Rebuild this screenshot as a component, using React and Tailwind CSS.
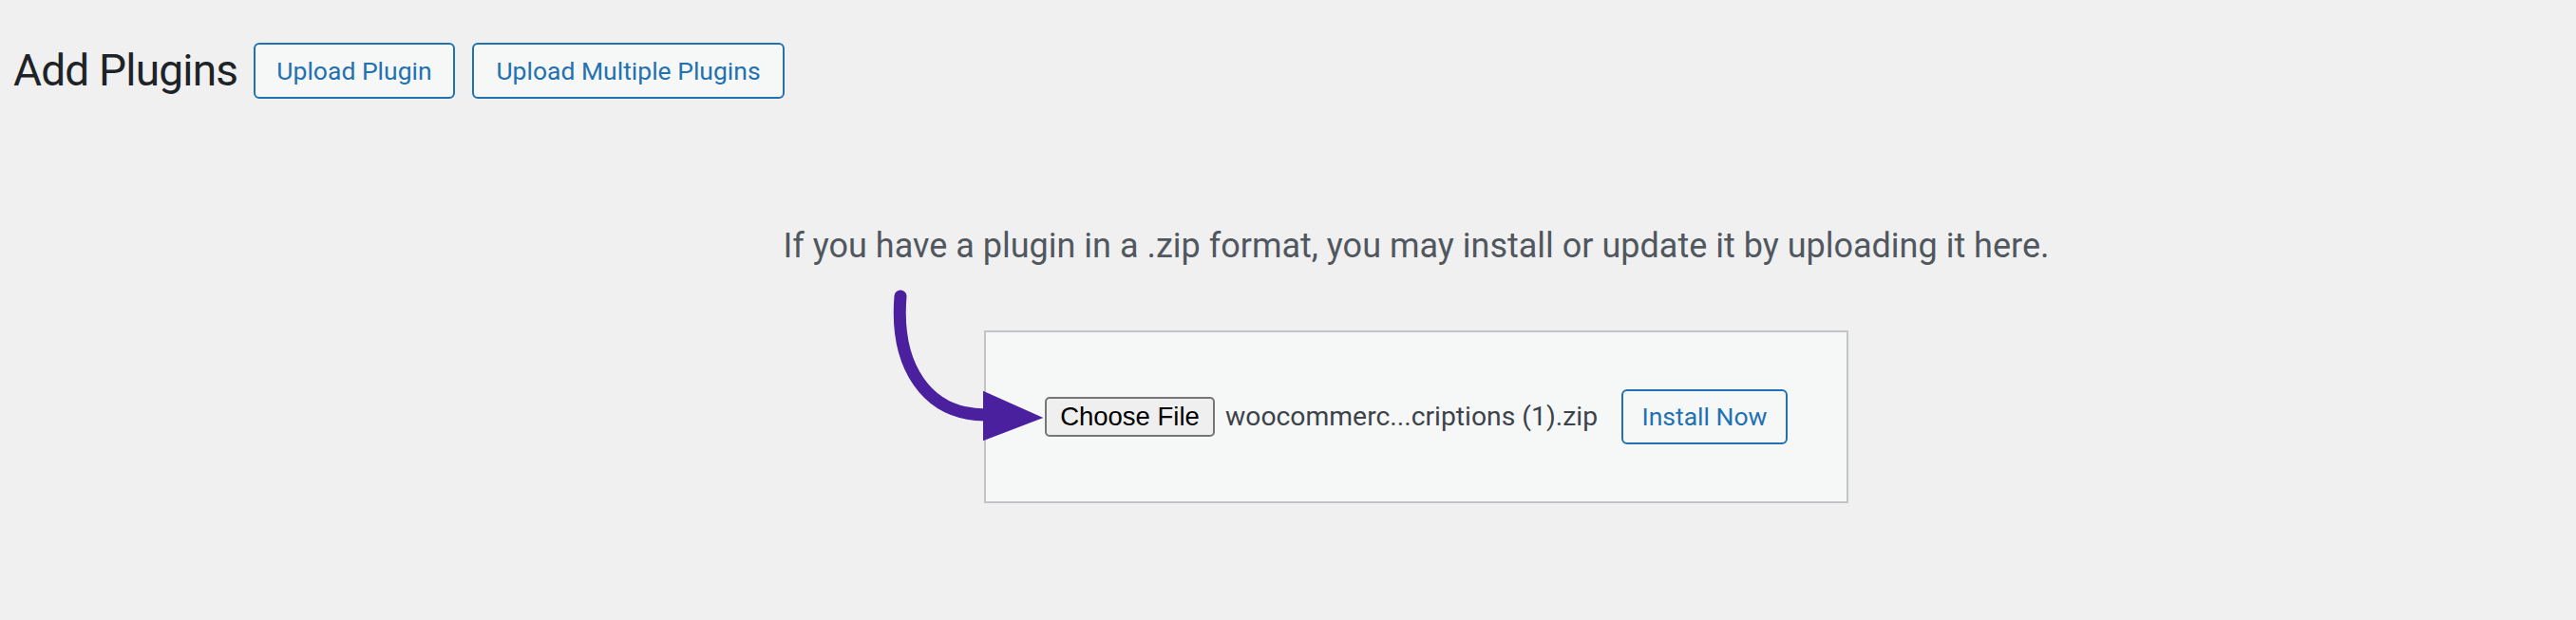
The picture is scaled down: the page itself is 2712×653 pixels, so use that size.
import React from "react";

export default function App() {
  return (
    <div className="relative w-[2712px] h-[653px] overflow-hidden bg-[#f0f0f1] font-['Roboto','Noto_Sans',sans-serif]">
      <div className="flex items-center pl-[14px] pt-[45px]">
        <h1 className="w-[235px] shrink-0 whitespace-nowrap text-[46px] leading-[59px] font-normal tracking-[-0.8px] text-[#1d2327]">Add Plugins</h1>
        <button className="ml-[18px] h-[59px] w-[212px] shrink-0 rounded-[6px] border-2 border-[#2271b1] bg-[#f6f7f7] text-[26.5px] text-[#2271b1]">
          Upload Plugin
        </button>
        <button className="ml-[18px] h-[59px] w-[329px] shrink-0 rounded-[6px] border-2 border-[#2271b1] bg-[#f6f7f7] text-[26.5px] text-[#2271b1]">
          Upload Multiple Plugins
        </button>
      </div>

      <div className="flex flex-col items-center pl-[270px]">
        <p className="mt-[128px] text-[36px] leading-[54px] text-[#50575e] text-center whitespace-nowrap">
          If you have a plugin in a .zip format, you may install or update it by uploading it here.
        </p>
        <div className="mt-[62px] flex h-[182px] w-[910px] items-center justify-between border-2 border-[#c3c4c7] bg-[#f6f7f7] px-[62px]">
          <div className="flex items-center">
            <span className="flex h-[42px] w-[179px] items-center justify-center rounded-[5px] border-2 border-[#767676] bg-[#efefef] font-['Liberation_Sans',Arial,sans-serif] text-[27.5px] text-black">
              Choose File
            </span>
            <span className="ml-[11px] text-[28.3px] text-[#3c434a] whitespace-nowrap">woocommerc...criptions (1).zip</span>
          </div>
          <button className="h-[58px] w-[175px] rounded-[6px] border-2 border-[#2271b1] bg-[#f6f7f7] text-[26.5px] text-[#2271b1]">
            Install Now
          </button>
        </div>
      </div>

      <svg className="absolute left-[920px] top-[295px]" width="200" height="180" viewBox="0 0 200 180">
        <path d="M28 17 C22 90 55 142 118 142" fill="none" stroke="#4a209f" strokeWidth="13" strokeLinecap="round" />
        <polygon points="115,116.7 115,169.3 178.3,145" fill="#4a209f" />
      </svg>
    </div>
  );
}
